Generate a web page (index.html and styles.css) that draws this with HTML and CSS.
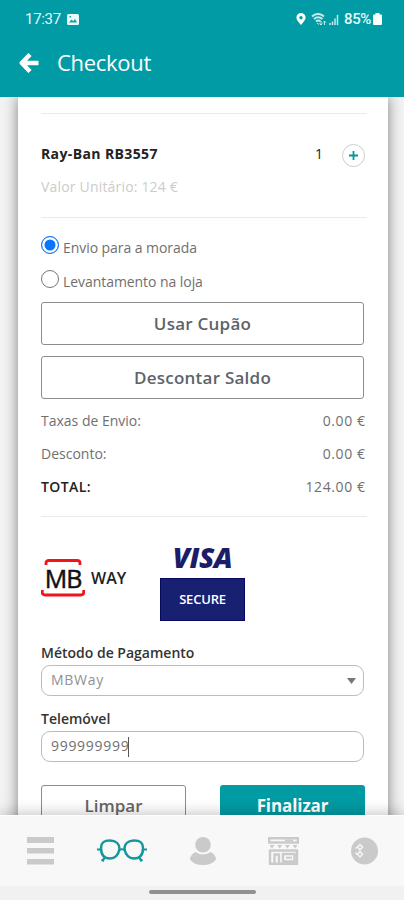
FILE: index.html
```html
<!DOCTYPE html>
<html lang="pt">
<head>
<meta charset="utf-8">
<title>Checkout</title>
<link rel="stylesheet" href="styles.css">
</head>
<body>
<header class="header">
  <div class="status">
    <span class="clock">17:37</span>
    <svg class="picture" width="12" height="11" viewBox="0 0 12 11"><rect width="12" height="11" rx="1.5" fill="#e8fafa"/><path d="M2 8.5 4.5 5.5 6.2 7.2 8 5 10 8.500ZM2.500 2h1.500v1.500H2.500Z" fill="#169da8"/></svg>
    <span class="spacer"></span>
    <svg class="pin" width="10" height="12" viewBox="0 0 10 12"><path fill="#fff" fill-rule="evenodd" d="M5 0a4.600 4.600 0 0 1 4.600 4.600C9.600 7.500 5 12 5 12S.4 7.500.4 4.600A4.600 4.600 0 0 1 5 0Zm0 3a1.700 1.700 0 1 0 0 3.400A1.700 1.700 0 0 0 5 3Z"/></svg>
    <svg class="signal" width="29" height="13" viewBox="0 0 29 13" fill="none" stroke="#c4eaec"><path d="M1 3.500Q7-1.500 13 3.500M3 6Q7 2.500 11.500 6M5 8.500Q7 6.500 9.500 8.500" stroke-width="2"/><path d="m6 10 2 1.500M10 8v4m-1.500-1.500L10 12l1.500-1.500M13.500 12V8m-1.300 1.500L13.500 8l1.300 1.500" stroke-width="1"/><path d="M19 12v-2M21.500 12V8.500M24 12V5.500M26.500 12V2" stroke-width="1.500"/></svg>
    <span class="percent">85%</span>
    <svg class="battery" width="9" height="12" viewBox="0 0 9 12"><path fill="#fff" d="M2.500 0h4v1.500H8a1 1 0 0 1 1 1V11a1 1 0 0 1-1 1H1a1 1 0 0 1-1-1V2.500a1 1 0 0 1 1-1h1.500Z"/></svg>
  </div>
  <div class="title-bar">
    <svg width="20" height="20" viewBox="0 0 20 20" fill="none" stroke="#fff" stroke-width="4.500" stroke-linejoin="round"><path d="M11 1.500 2.800 10l8.200 8.500M3 10h16.500"/></svg>
    <h1>Checkout</h1>
  </div>
</header>
<main class="content">
  <section class="card">
    <div class="product">
      <div class="product-row"><strong>Ray-Ban RB3557</strong><span class="quantity">1</span><button class="add" aria-label="Adicionar"><svg width="11" height="11" viewBox="0 0 11 11"><path d="M5.500 1v9M1 5.500h9" stroke="#00999f" stroke-width="1.800"/></svg></button></div>
      <p class="unit">Valor Unitário: 124 €</p>
    </div>
    <div class="radio-row"><span class="radio checked"></span><span class="ship">Envio para a morada</span></div>
    <div class="radio-row"><span class="radio"></span><span class="pickup">Levantamento na loja</span></div>
    <button class="outline coupon">Usar Cupão</button>
    <button class="outline balance">Descontar Saldo</button>
    <div class="totals">
      <div><span class="fees">Taxas de Envio:</span><span class="amount">0.00 €</span></div>
      <div><span class="discount">Desconto:</span><span class="amount">0.00 €</span></div>
      <div><strong>TOTAL:</strong><span class="amount">124.00 €</span></div>
    </div>
    <div class="brands">
      <div class="mbway">
        <div class="mb"><svg width="44" height="7" viewBox="0 0 44 7"><path d="M5 6V4Q5 1.500 8 1.500H36Q39 1.500 39 4V6" fill="none" stroke="#f0151b" stroke-width="2.800"/></svg><span>MB</span><svg width="44" height="7" viewBox="0 0 44 7"><path d="M1.300 0V2.500Q1.300 5 4 5H40Q42.700 5 42.700 2.500V0" fill="none" stroke="#f0151b" stroke-width="2.800"/></svg></div>
        <span class="way">WAY</span>
      </div>
      <div class="visa"><span class="visa-name">VISA</span><span class="secure">SECURE</span></div>
    </div>
    <label class="method">Método de Pagamento</label>
    <div class="field select"><span>MBWay</span><svg width="9" height="6" viewBox="0 0 9 6"><path d="M0 0h9L4.500 6Z" fill="#777"/></svg></div>
    <label class="phone">Telemóvel</label>
    <div class="field number"><span>999999999</span><i class="caret"></i></div>
    <div class="actions"><button class="clear">Limpar</button><button class="finish">Finalizar</button></div>
  </section>
</main>
<nav class="tabs">
  <div class="tab-items">
    <svg width="27" height="28" viewBox="0 0 27 28" fill="#cacaca"><path d="M0 0h27v6H0ZM0 11h27v5.500H0ZM0 22h27v5.500H0Z"/></svg>
    <svg class="glasses" width="52" height="24" viewBox="0 0 52 24" fill="none" stroke="#16969d" stroke-width="2.500"><path d="M5 10C5 4 8 2.500 14 2.500C20 2.500 23.500 6 23.500 11C22.500 17 18.500 20.500 14 20.500C8.500 20.500 5 17 5 10ZM47 10C47 4 44 2.500 38 2.500C32 2.500 28.500 6 28.500 11C29.500 17 33.500 20.500 38 20.500C43.500 20.500 47 17 47 10Z"/><path d="M23 12q3-1.500 6 0M1 11.500h4M47 11.500h4M9 19l-2 3.500-1.500-1M43 19l2 3.500 1.500-1" stroke-width="2.200"/></svg>
    <svg width="26" height="28" viewBox="0 0 26 28" fill="#cacaca"><circle cx="13" cy="7.800" r="7.800"/><path d="M5.500 15Q13 20 20.500 15Q26 18 26 22.500Q22 28 13 28T0 22.500Q0 18 5.500 15Z"/></svg>
    <svg class="store" width="31" height="28" viewBox="0 0 31 28" fill="none" stroke="#cacaca" stroke-width="2.400"><path d="M1.200 1.200h28.600v4.300H1.200ZM2 13v13.800h27V13M1 13.500h29M6.500 27V17.500h4.500V27M15 17h11.500v7.500H15Z"/><path d="M17 3.500h8" stroke-width="2"/><path d="M1.500 8h5L4 11.500ZM9.200 8h5l-2.500 3.500ZM16.900 8h5l-2.500 3.500ZM24.500 8h5L27 11.500Z" fill="#cacaca" stroke="none"/><path d="M18 20.700h6" stroke-width="2"/></svg>
    <svg class="coin" width="27" height="28" viewBox="0 0 27 28"><circle cx="13.500" cy="14" r="13.500" fill="#cacaca"/><path d="m9 7.500 2.500 2.500L9 12.800 6.500 10ZM9 14.500l2.500 2.800L9 20l-2.500-2.700ZM4.500 11.500l2-1.500M4.500 16l2 1.300" fill="none" stroke="#f5f5f5" stroke-width="1.500"/></svg>
  </div>
  <div class="home"></div>
</nav>
</body>
</html>
```
FILE: styles.css
```css
* { box-sizing: border-box; }
body { margin: 0; width: 404px; height: 900px; overflow: hidden; display: flex; flex-direction: column; font-family: "Open Sans", "Noto Sans", sans-serif; font-size: 14px; color: #707070; background: #f2f2f2; }
button { font: inherit; margin: 0; padding: 0; background: none; }
.header { height: 97px; flex: none; background: #009ba5; color: #fff; }
.status { height: 38px; padding: 0 22px 0 25px; display: flex; align-items: center; font: 500 15px/38px Roboto, sans-serif; color: #e5fafa; }
.clock { width: 37px; font-weight: 400; letter-spacing: -.3px; }
.picture { margin-left: 5px; }
.spacer { flex: 1; }
.pin { margin-right: -1px; }
.signal { margin-left: 6px; }
.percent { margin-left: 4px; width: 29px; letter-spacing: -.4px; }
.title-bar { height: 50px; padding-left: 19px; display: flex; align-items: center; gap: 18px; }
h1 { margin: -2px 0 0; font-size: 22px; font-weight: 400; line-height: 50px; letter-spacing: -.3px; }
.content { height: 718px; flex: none; overflow: hidden; }
.card { width: 370px; height: 760px; margin-left: 18px; padding: 16px 23px 0; background: #fff; box-shadow: 0 0 13px rgba(0,0,0,.48); }
.product { height: 105px; margin-right: -2px; padding-top: 26px; border: solid #e9e9e9; border-width: 1px 0; }
.product-row { display: flex; align-items: center; height: 30px; color: #222; }
.product-row strong { flex: 1; font-weight: 700; letter-spacing: .38px; margin-top: -3px; }
.quantity { margin: -3px 19px 0 0; }
.add { width: 23px; height: 23px; margin-right: 2px; border: 1px solid #ccc; border-radius: 50%; display: flex; align-items: center; justify-content: center; }
.unit { margin: 5px 0 0; line-height: 24px; letter-spacing: .18px; color: #ccc; }
.radio-row { height: 34px; display: flex; align-items: center; gap: 4px; }
.product + .radio-row { margin-top: 12px; }
.radio-row span:last-child { padding-top: 1px; letter-spacing: -.06px; }
.radio { width: 18px; height: 18px; border: 1px solid #777; border-radius: 50%; margin-top: -5px; }
.checked { border: 1.5px solid #1675f2; background: #0875ff; box-shadow: inset 0 0 0 2.5px #fff; }
.outline { display: block; width: 323px; height: 43px; border: 1px solid #8a8d8f; border-radius: 3px; color: #5d6468; font-size: 17px; font-weight: 600; letter-spacing: .25px; }
.coupon { margin-top: 4px; }
.balance { margin-top: 11px; }
.totals { margin: 5px -2px 0 0; height: 113px; border-bottom: 1px solid #e9e9e9; }
.totals div { height: 33px; padding-right: 2px; display: flex; align-items: center; justify-content: space-between; }
.totals strong { color: #222; font-weight: 600; letter-spacing: .4px; }
.amount { letter-spacing: .6px; margin-right: -.6px; }
.brands { height: 120px; padding-top: 28px; display: flex; gap: 34px; }
.mbway { width: 85px; display: flex; align-items: flex-start; }
.mb { width: 44px; margin-top: 14px; display: flex; flex-direction: column; align-items: center; color: #111; }
.mb svg { display: block; }
.mb span { font: 25px/24px "Open Sans", sans-serif; letter-spacing: -1px; -webkit-text-stroke: .5px #111; }
.way { margin: 22px 0 0 6px; font: 600 16px/22px "Open Sans", sans-serif; color: #222; }
.visa { width: 85px; display: flex; flex-direction: column; align-items: center; }
.visa-name { margin-top: -4px; font: italic 800 28px/32px "Open Sans", sans-serif; letter-spacing: -.5px; height: 37px; color: #1b1d68; }
.secure { width: 85px; height: 43px; background: #182071; color: #fff; font-size: 13px; font-weight: 600; letter-spacing: -.2px; line-height: 40px; text-align: center; border: 1px solid #08085d; }
label { display: block; font-weight: 600; line-height: 20px; color: #333; }
.method { margin-top: 6px; }
.field { width: 323px; height: 31px; margin-top: 2px; padding: 0 7px 0 9px; display: flex; align-items: center; border: 1px solid #bcbcbc; border-radius: 9px; background: #fff; }
.select { justify-content: space-between; color: #929292; }
.select span { letter-spacing: .7px; }
.number span { letter-spacing: .7px; }
.field span { margin-top: -2px; }
.phone { margin-top: 13px; }
.caret { width: 1px; height: 20px; margin-left: -1px; background: #555; }
.actions { display: flex; justify-content: space-between; margin-top: 23px; }
.actions button { width: 145px; height: 43px; padding-bottom: 3px; border: 1px solid #8a8d8f; border-radius: 3px; font-size: 17px; font-weight: 600; color: #666; }
.actions .finish { border: 0; color: #fff; background: #009ba3; font-weight: 700; letter-spacing: -.1px; }
.tabs { height: 85px; flex: none; background: #f8f8f8; border-top: 1px solid #fff; box-shadow: 0 -1px 14px rgba(0,0,0,.25); position: relative; display: flex; flex-direction: column; }
.tab-items { height: 70px; padding-left: 27px; display: flex; align-items: center; gap: 42px; }
.glasses { margin-top: -2px; }
.store, .coin { margin-left: 10px; }
.home { flex: 1; background: #f1f1f1; }
.home::before { content: ""; display: block; width: 107px; height: 4px; margin: 4px auto 0; border-radius: 2px; background: #919191; }
```
